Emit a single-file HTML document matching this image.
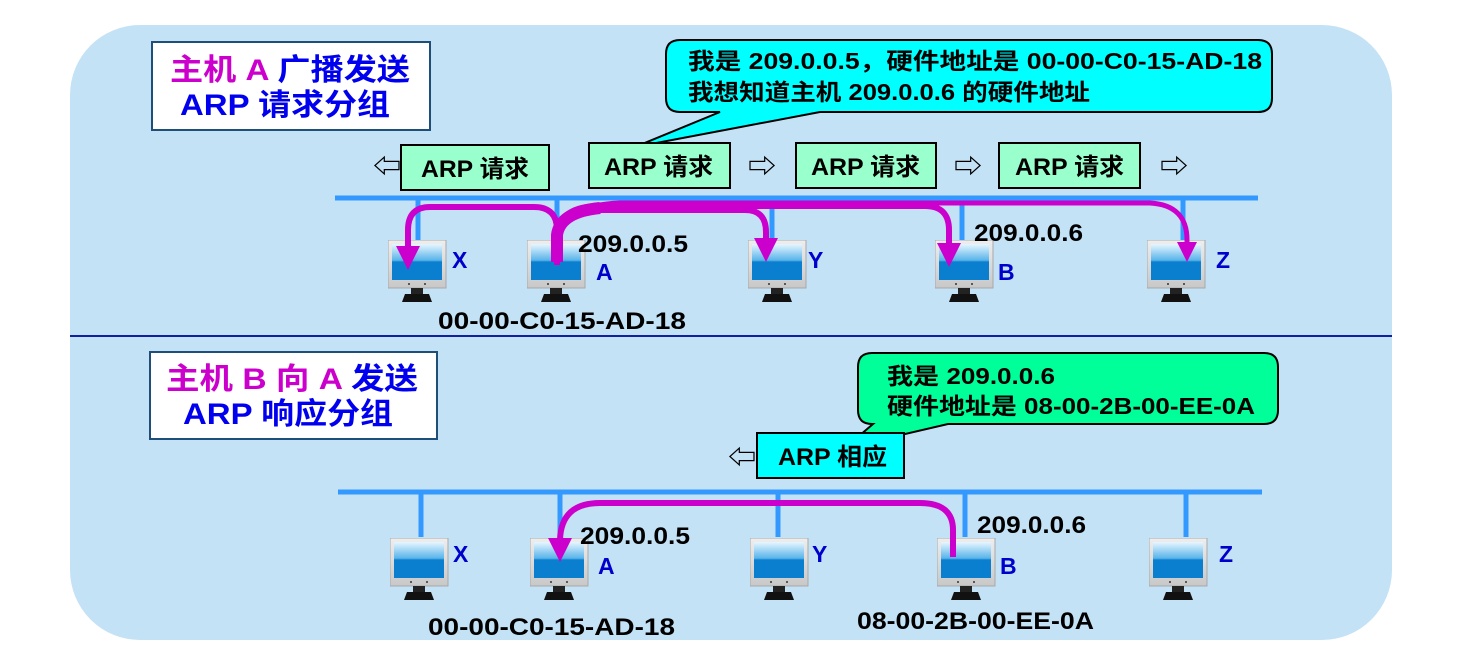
<!DOCTYPE html>
<html><head><meta charset="utf-8"><style>
html,body{margin:0;padding:0;background:#fff;}
svg{display:block;}
text{font-family:"Liberation Sans","Noto Sans CJK SC",sans-serif;font-weight:bold;}
</style></head><body>
<svg width="1463" height="656" viewBox="0 0 1463 656" xmlns="http://www.w3.org/2000/svg">
<defs>
<linearGradient id="scr" x1="0" y1="0" x2="0" y2="1">
<stop offset="0" stop-color="#e8f6ff"/><stop offset="0.45" stop-color="#5ab4ea"/><stop offset="0.5" stop-color="#0a7fd0"/><stop offset="1" stop-color="#0a7fd0"/>
</linearGradient>
<linearGradient id="frm" x1="0" y1="0" x2="0" y2="1">
<stop offset="0" stop-color="#eeeeee"/><stop offset="1" stop-color="#c8c8c8"/>
</linearGradient>
<symbol id="pc" viewBox="0 0 60 64">
<rect x="0" y="0" width="58" height="48" fill="url(#frm)" stroke="#a8a8a8" stroke-width="1"/>
<rect x="4" y="4" width="50" height="36" fill="url(#scr)"/>
<circle cx="21" cy="44" r="1" fill="#333"/><circle cx="37" cy="44" r="1" fill="#333"/>
<rect x="23" y="48" width="12" height="6" fill="#222"/>
<path d="M14 62 L17 54 L41 54 L44 62 Z" fill="#111"/>
</symbol>
<marker id="ah" markerWidth="4" markerHeight="4" refX="2" refY="2" orient="auto" markerUnits="strokeWidth"><path d="M0,0 L4,2 L0,4 Z" fill="#cc00cc"/></marker>
</defs>
<rect x="70" y="25" width="1322" height="615" rx="70" fill="#c4e2f6"/>
<line x1="70" y1="336" x2="1392" y2="336" stroke="#1020a0" stroke-width="2"/>

<!-- top title -->
<rect x="152" y="42" width="278" height="88" fill="#fff" stroke="#1f4e79" stroke-width="2"/>
<text x="170" y="80" font-size="30" fill="#cc00cc" textLength="240" lengthAdjust="spacingAndGlyphs">主机 A <tspan fill="#0000ee">广播发送</tspan></text>
<text x="180" y="115" font-size="30" fill="#0000ee" textLength="210" lengthAdjust="spacingAndGlyphs">ARP 请求分组</text>

<!-- top bubble -->
<path d="M680 40 H1258 Q1272 40 1272 54 V98 Q1272 112 1258 112 H820 L635 147 L720 112 H680 Q666 112 666 98 V54 Q666 40 680 40 Z" fill="#00ffff" stroke="#000" stroke-width="2"/>
<text x="688" y="69" font-size="23" fill="#000" textLength="574" lengthAdjust="spacingAndGlyphs">我是 209.0.0.5，硬件地址是 00-00-C0-15-AD-18</text>
<text x="688" y="100" font-size="23" fill="#000" textLength="402" lengthAdjust="spacingAndGlyphs">我想知道主机 209.0.0.6 的硬件地址</text>

<!-- ARP request boxes -->
<g fill="#99ffcc" stroke="#000" stroke-width="2">
<rect x="401" y="145" width="148" height="45"/>
<rect x="589" y="143" width="141" height="45"/>
<rect x="796" y="143" width="140" height="45"/>
<rect x="999" y="143" width="141" height="45"/>
</g>
<g font-size="24" fill="#000">
<text x="421" y="177" textLength="108" lengthAdjust="spacingAndGlyphs">ARP 请求</text>
<text x="604" y="175" textLength="109" lengthAdjust="spacingAndGlyphs">ARP 请求</text>
<text x="811" y="175" textLength="109" lengthAdjust="spacingAndGlyphs">ARP 请求</text>
<text x="1015" y="175" textLength="109" lengthAdjust="spacingAndGlyphs">ARP 请求</text>
</g>
<g font-size="28" fill="#000" font-weight="normal">
<text x="373" y="176">⇦</text>
<text x="748" y="176">⇨</text>
<text x="954" y="176">⇨</text>
<text x="1160" y="176">⇨</text>
</g>

<!-- top bus -->
<g stroke="#3399ff" stroke-width="5">
<line x1="335" y1="198" x2="1258" y2="198"/>
<line x1="418" y1="198" x2="418" y2="242"/>
<line x1="557" y1="198" x2="557" y2="242"/>
<line x1="772" y1="198" x2="772" y2="242"/>
<line x1="962" y1="198" x2="962" y2="242"/>
<line x1="1183" y1="198" x2="1183" y2="242"/>
</g>
<use href="#pc" x="388" y="240" width="60" height="64"/>
<use href="#pc" x="527" y="240" width="60" height="64"/>
<use href="#pc" x="748" y="240" width="60" height="64"/>
<use href="#pc" x="935" y="240" width="60" height="64"/>
<use href="#pc" x="1147" y="240" width="60" height="64"/>
<g font-size="23" fill="#0000cc">
<text x="452" y="268">X</text><text x="596" y="280">A</text><text x="808" y="268">Y</text><text x="998" y="280">B</text><text x="1216" y="268">Z</text>
</g>
<g font-size="24" fill="#000">
<text x="578" y="252" textLength="110" lengthAdjust="spacingAndGlyphs">209.0.0.5</text>
<text x="974" y="241" textLength="109" lengthAdjust="spacingAndGlyphs">209.0.0.6</text>
<text x="438" y="329" textLength="248" lengthAdjust="spacingAndGlyphs">00-00-C0-15-AD-18</text>
</g>
<!-- top magenta arrows -->
<g fill="none" stroke="#cc00cc" stroke-linecap="butt">
<path d="M557 265 V230 Q557 207 534 207 H430 Q408 207 408 230 V258" stroke-width="6" marker-end="url(#ah)"/>
<path d="M557 265 V235 Q557 210 590 210 H745 Q766 210 766 232 V250" stroke-width="6" marker-end="url(#ah)"/>
<path d="M557 265 V235 Q560 206 600 206 H925 Q949 206 949 230 V255" stroke-width="6" marker-end="url(#ah)"/>
<path d="M557 265 V240 Q562 205 620 203 H1150 Q1187 205 1187 240 V252" stroke-width="5" marker-end="url(#ah)"/>
<path d="M557 262 V235 Q560 212 600 208" stroke-width="12"/>
</g>

<!-- bottom title -->
<rect x="150" y="352" width="287" height="87" fill="#fff" stroke="#1f4e79" stroke-width="2"/>
<text x="166" y="389" font-size="30" fill="#cc00cc" textLength="252" lengthAdjust="spacingAndGlyphs">主机 B 向 A <tspan fill="#0000ee">发送</tspan></text>
<text x="183" y="424" font-size="30" fill="#0000ee" textLength="210" lengthAdjust="spacingAndGlyphs">ARP 响应分组</text>

<!-- bottom bubble -->
<path d="M872 353 H1264 Q1278 353 1278 367 V410 Q1278 424 1264 424 H948 L845 448 L873 424 H872 Q858 424 858 410 V367 Q858 353 872 353 Z" fill="#00ff99" stroke="#000" stroke-width="2"/>
<text x="887" y="384" font-size="23" fill="#000" textLength="168" lengthAdjust="spacingAndGlyphs">我是 209.0.0.6</text>
<text x="887" y="414" font-size="23" fill="#000" textLength="368" lengthAdjust="spacingAndGlyphs">硬件地址是 08-00-2B-00-EE-0A</text>
<rect x="757" y="433" width="147" height="45" fill="#00ffff" stroke="#000" stroke-width="2"/>
<text x="778" y="465" font-size="24" fill="#000" textLength="109" lengthAdjust="spacingAndGlyphs">ARP 相应</text>
<text x="728" y="467" font-size="28" fill="#000" font-weight="normal">⇦</text>

<!-- bottom bus -->
<g stroke="#3399ff" stroke-width="5">
<line x1="338" y1="492" x2="1262" y2="492"/>
<line x1="421" y1="492" x2="421" y2="537"/>
<line x1="560" y1="492" x2="560" y2="537"/>
<line x1="778" y1="492" x2="778" y2="537"/>
<line x1="965" y1="492" x2="965" y2="537"/>
<line x1="1186" y1="492" x2="1186" y2="537"/>
</g>
<use href="#pc" x="390" y="538" width="60" height="64"/>
<use href="#pc" x="530" y="538" width="60" height="64"/>
<use href="#pc" x="750" y="538" width="60" height="64"/>
<use href="#pc" x="937" y="538" width="60" height="64"/>
<use href="#pc" x="1149" y="538" width="60" height="64"/>
<g font-size="23" fill="#0000cc">
<text x="453" y="562">X</text><text x="598" y="574">A</text><text x="812" y="562">Y</text><text x="1000" y="574">B</text><text x="1219" y="562">Z</text>
</g>
<g font-size="24" fill="#000">
<text x="580" y="544" textLength="110" lengthAdjust="spacingAndGlyphs">209.0.0.5</text>
<text x="977" y="533" textLength="109" lengthAdjust="spacingAndGlyphs">209.0.0.6</text>
<text x="428" y="635" textLength="247" lengthAdjust="spacingAndGlyphs">00-00-C0-15-AD-18</text>
<text x="857" y="629" textLength="237" lengthAdjust="spacingAndGlyphs">08-00-2B-00-EE-0A</text>
</g>
<path d="M953 557 V530 Q953 503 920 503 H600 Q561 503 560 540 V550" fill="none" stroke="#cc00cc" stroke-width="6" marker-end="url(#ah)"/>
</svg>
</body></html>
